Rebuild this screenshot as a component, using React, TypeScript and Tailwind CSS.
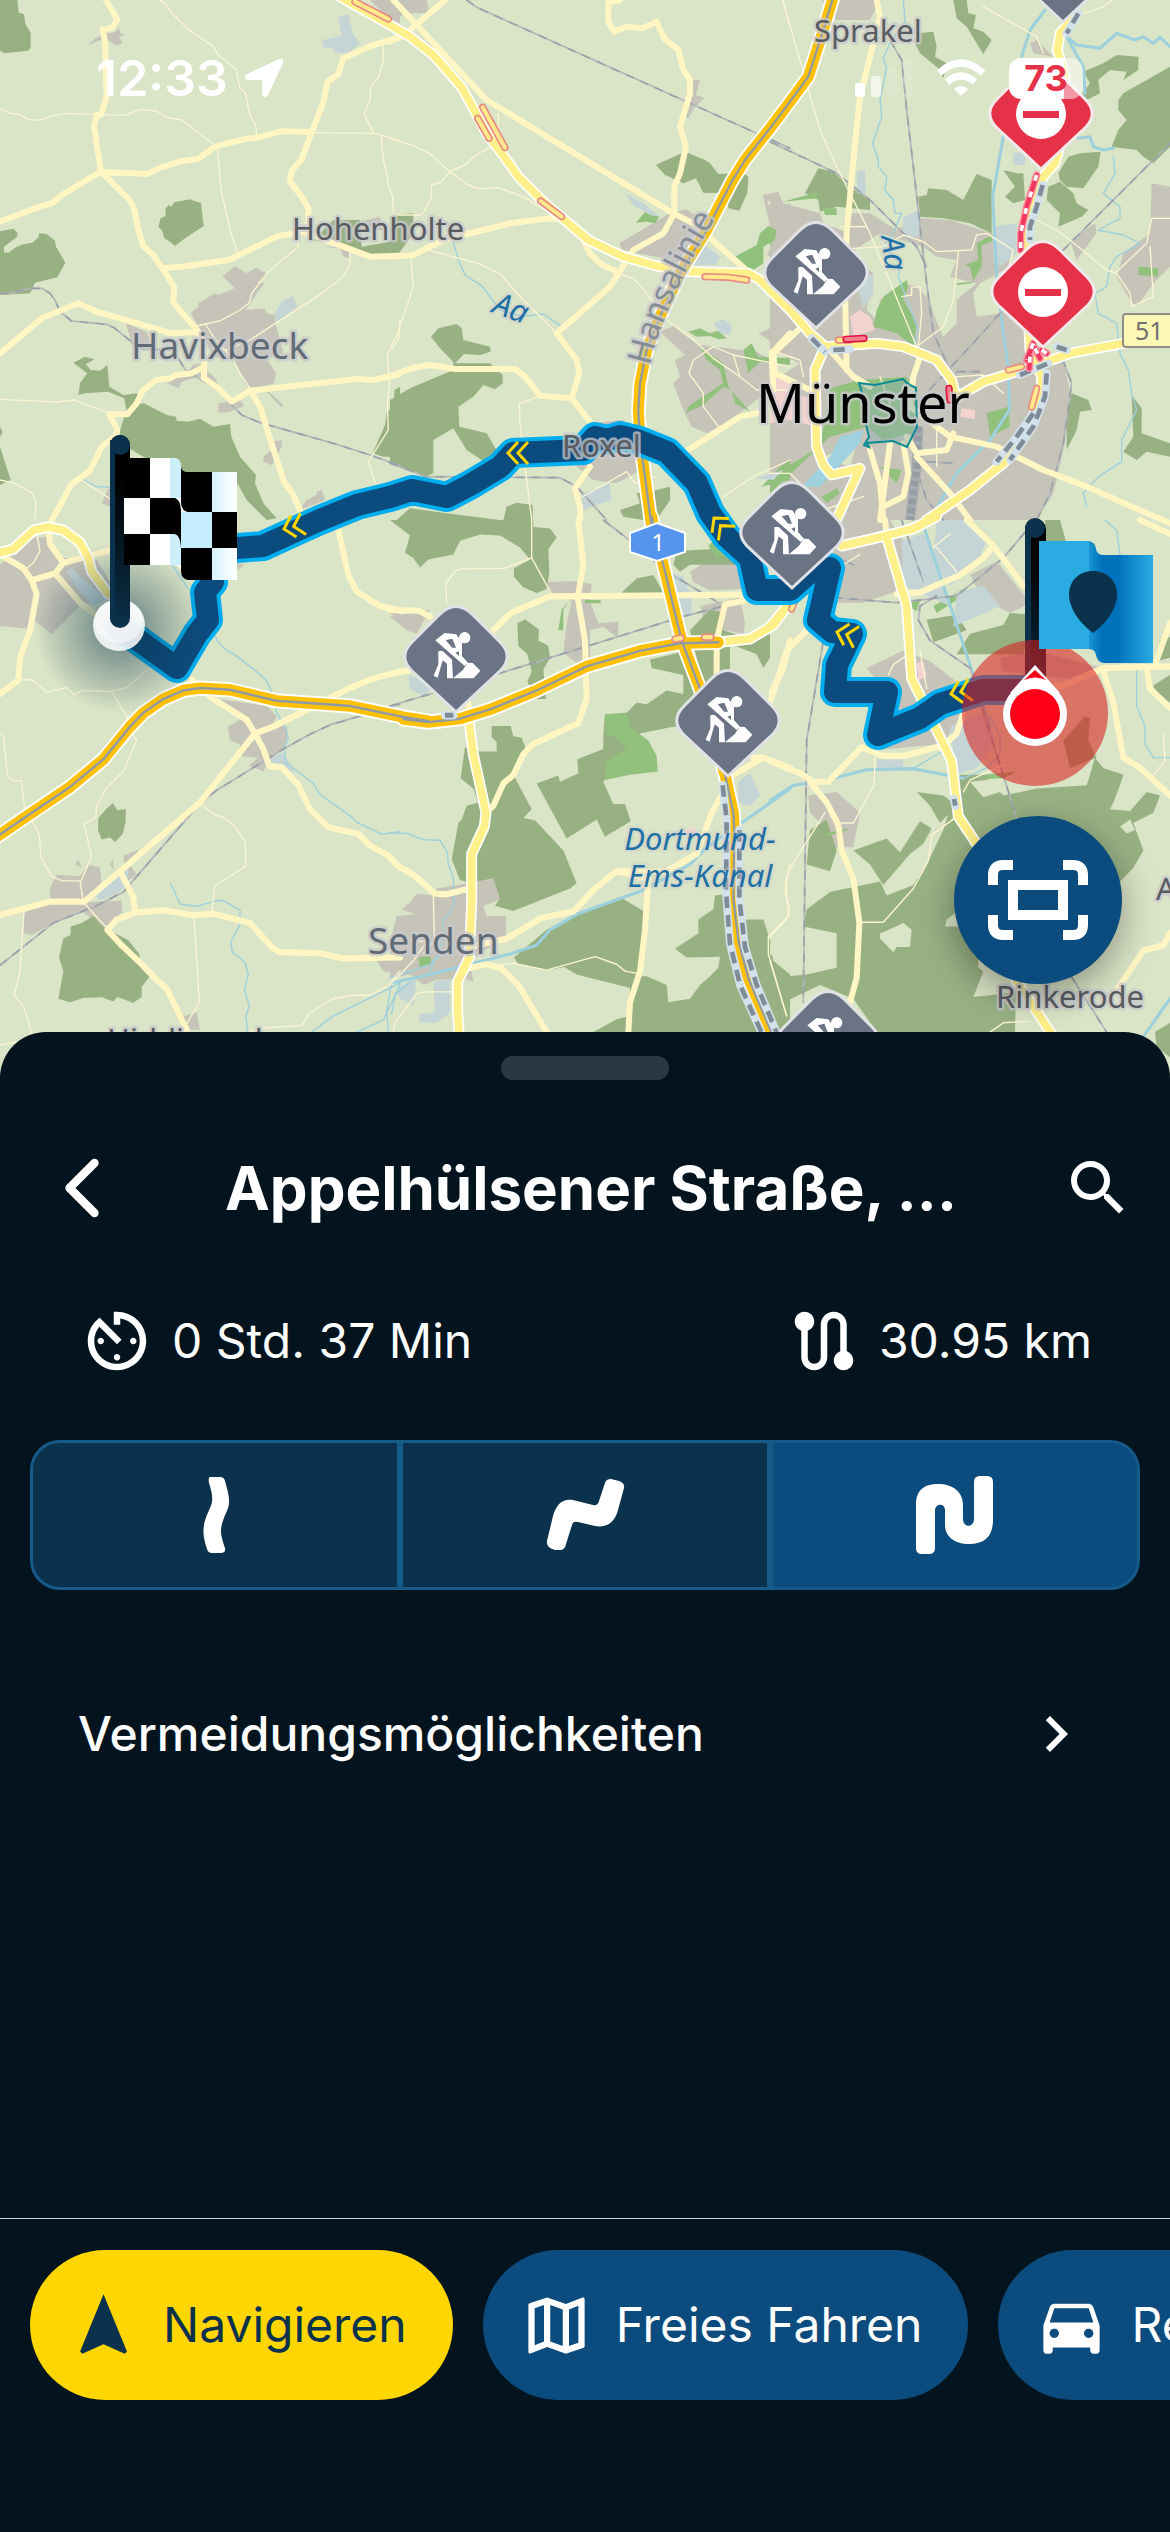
import React, { useState } from 'react';
import { ChevronLeft } from 'lucide-react';
import {
  MdAvTimer,
  MdChevronRight,
  MdDirectionsCar,
  MdNavigation,
  MdOutlineMap,
  MdRoute,
  MdSearch,
} from 'react-icons/md';

type Layer =
  | 'urban'
  | 'field'
  | 'woods'
  | 'clearing'
  | 'park'
  | 'pond'
  | 'pink'
  | 'lake'
  | 'stream'
  | 'canal'
  | 'rail'
  | 'yard'
  | 'minor'
  | 'road'
  | 'primary'
  | 'motorway'
  | 'works'
  | 'slow'
  | 'jam'
  | 'closed';

type Tile = { transform: string } & Partial<Record<Layer, string>>;

// Every tile has its own grid, three units to a pixel
const tiles: Tile[] = [
  {
    transform: 'translate(0 0) scale(0.33333)',
    woods:
      'M0 0H52L56 38L72 42L76 72L92 98V143L84 152L14 160L0 152Z M475 680L482 655L497 648L496 625L508 615L513 622L523 607L570 598L590 605L603 608L611 678L555 715L525 738L510 725L493 715L487 692Z M0 694L40 686L53 700L50 712L12 740V757L25 758L50 740L72 732L98 728L115 712L118 700L140 702L165 722L168 740L196 788L172 832L105 848L90 880L0 885Z M220 1088L255 1070L284 1078L258 1092L272 1110L300 1112L322 1095L328 1160L370 1185L410 1180L420 1190L400 1215L432 1210L500 1245L528 1250L530 1262L565 1265L600 1256L640 1280L690 1272L694 1310L720 1370L768 1425L765 1450L790 1510L830 1555L800 1560L740 1500L712 1450L540 1415L430 1370L360 1330L360 1290L380 1230L372 1195L325 1175L255 1180L235 1185L240 1150L262 1120Z M1200 1160L1184 1170L1180 1215L1160 1240L1155 1275L1118 1360L1150 1370L1200 1370Z M0 1280L8 1296L0 1310Z M0 1340L32 1440L0 1455Z M1000 660H1080L1085 740L1200 720V765H1110L1040 740L940 720Z',
    urban:
      'M264 135L285 115L320 100L340 98L358 85L360 98L376 103L358 112L368 128L350 138L325 120L300 120Z M668 828L706 798L740 820L770 803L800 822L770 850L795 848L770 880L755 905L735 930L795 926L800 940L825 945L828 975L850 1060L800 1075L828 1120L822 1150L790 1160L850 1215L845 1224L800 1175L755 1172L735 1150L700 1080L640 1070L600 990L572 938L596 920V908L648 878L652 886L704 865Z M378 970L440 995L460 1050H400Z M500 1150L560 1120L580 1095L600 1090L650 1140L655 1172L600 1130L545 1145L535 1165Z M655 1210L720 1200L732 1218L690 1235L655 1238Z M790 1370L815 1350L820 1325L845 1320V1340L835 1360L815 1395L790 1385Z M920 1500L950 1485L950 1475L965 1470L975 1500L900 1530Z M305 1510L325 1465L330 1470V1520Z M975 740H1045L1050 775L1030 770L1020 745L1005 745Z M1060 670L1140 650L1150 690H1060Z M1110 0H1200V70L1160 50Z',
    pond: 'M1015 52L1045 42L1058 100L1080 130L1045 160L1005 158L1000 145L970 142L968 120L1025 108Z M825 940L845 905L878 888L892 920L830 968Z',
    minor:
      'M0 325L30 340L58 343L83 358L115 361L150 350L195 340L375 346L420 328L470 333L500 352L545 360L640 432 M478 0L498 13L515 38L565 88L640 140L653 163L708 208L720 265L737 280L748 340L768 380L770 408 M652 445L663 570L690 690L712 758 M940 398L1125 400L1200 423 M1150 135V180L1137 230L1113 260L1110 300L1092 342L1122 400 M1143 405L1150 480L1160 520L1165 555L1178 590L1180 640 M895 720V740L805 815L755 880L748 908L720 930L662 962L590 978 M1050 740V790L1030 830L965 880L835 965L750 1020L680 1050L640 1045 M618 975L640 1010L700 1080L720 1120L755 1172 M1200 960L1195 1020L1162 1060L1168 1150L1162 1210L1165 1290L1105 1385L1125 1450 M0 1198L170 1206L222 1200L330 1240 M0 1440L45 1450L98 1480L108 1510L105 1560 M245 1440L328 1495',
    road: 'M318 0L352 58L335 85L308 88L316 130L320 290L303 345L290 345L282 380L303 515 M0 665L105 625L158 608L190 582L303 515L443 522L470 507L545 483L593 477L645 440L735 417L773 413L840 394L935 396 M1200 112L1120 135L1030 175L1015 222L983 245L970 308L935 396L905 478L875 512L870 545L905 590L925 625V700 M303 515L388 600L402 625L415 690L430 738L460 765L487 805L522 860L520 908L595 995L615 1060 M487 805L545 800L685 780L835 708L910 695L1110 770L1200 767 M0 1060L125 955L235 910L290 935L515 1000L595 995 M615 1060L612 1100L575 1120L528 1125L510 1135L468 1140L428 1172L410 1210L382 1243H328L352 1290L345 1310L305 1340L270 1412L212 1455L185 1508L155 1560 M612 1100V1135L655 1165L695 1205L752 1172L1070 1137L1120 1140L1200 1122 M752 1172L780 1220L808 1310L852 1445L880 1485L900 1530',
    rail: 'M0 880H30L90 865H125L150 880L165 900L180 935L215 963L320 973L345 985L400 1030L430 1048L520 1050L555 1108L655 1172L690 1210L725 1245L780 1268L1000 1330L1110 1365L1200 1397',
    stream: 'M245 1438L290 1460L328 1462',
  },
  {
    transform: 'translate(390 0) scale(0.33333)',
    woods:
      'M798 495L830 480L885 455L945 480L960 490L985 522L1030 520L1050 510L1075 530L1072 580L1048 632L1015 625L1010 580L940 578L918 535L880 550L825 525Z M123 1010L145 985L200 972L215 985L220 1020L300 1040L302 1055L270 1065L222 1062L195 1090H300L338 1125V1150L315 1168L280 1155L250 1190L205 1220L208 1280L290 1300L325 1360L320 1400L275 1380L230 1350L190 1285L130 1320V1420L110 1428L0 1390V1200L60 1165L190 1110V1085L150 1045Z M0 645L70 640V700L30 755L0 760Z M20 1560L60 1525L170 1540L330 1560Z M340 1560L350 1520L380 1508L428 1515V1560Z M690 1530L750 1510L740 1480L800 1470L840 1460V1500L800 1560H760L700 1550Z',
    park: 'M738 668L770 630L808 650L795 670L770 665Z M1035 770L1100 735L1110 700L1135 678L1160 690L1155 720L1120 740V790L1075 820Z M895 995L930 985L960 1000L985 992L1010 1015L985 1018L960 1008L920 1010Z M930 1040L1000 1090L1015 1160L1080 1235L1035 1210L1025 1170L1000 1160L940 1215L885 1240L900 1215L1000 1150L990 1110L950 1080Z M1060 1050L1085 1030L1105 1070L1200 1075V1095L1110 1085L1075 1120Z M1115 1460L1170 1400L1200 1380V1440Z M845 780L870 800L850 830Z',
    urban:
      'M688 730L840 640L890 628L960 680L930 760L870 790L800 770L740 760L695 748Z M0 0H110L118 40L50 40L10 60L0 60Z M1118 585L1165 575V590L1130 605L1150 630L1200 610V740L1130 770L1150 720Z M885 350L905 240L930 240L918 285L945 293L915 320L895 355Z M810 995L850 978L890 1010L930 1035L1100 1055L1180 1100L1150 1170L1100 1200L1050 1240L990 1280L950 1300L905 1280L880 1230L850 1150L870 1130L855 1080L885 1065Z M1105 1000L1140 985L1165 1000L1150 1030Z M605 1270L700 1260L750 1320L790 1380L735 1420L680 1450L610 1440L560 1400Z',
    pond: 'M705 580L760 610L810 650L780 645L730 615Z M945 735L990 770L975 795H910Z M970 970L1000 958L1025 975L1020 1005L990 1000Z M580 1480L660 1450L665 1500L580 1530L570 1500Z M1095 1435L1180 1410L1150 1440Z',
    minor:
      'M0 415L65 435L118 460L180 515L235 555L270 567L325 563L410 595L480 640 M180 515L228 493L262 462L305 440L325 400V340 M180 515L155 545L125 555L122 600L95 645H0 M120 752L265 790L330 822L400 900L500 1000 M0 1040L20 1010L70 860L62 770 M690 822L730 835L770 880L830 960L900 1010L970 1075L1050 1130L1030 1065L970 1040L910 1080L897 1120L940 1180V1220L990 1285 M1030 1065L1200 1100 M1050 1130L1100 1170H1200 M445 1190L388 1212L390 1270L405 1400L425 1560 M560 1500L710 1415L735 1450L800 1430 M1000 1490L1090 1430L1200 1380 M1178 0L1200 80',
    road: 'M690 0L655 8V65L672 95L712 80L758 85L800 65L822 115L865 150L880 210L900 240V280L870 380L888 440L870 520L853 560V640L820 700L730 750L660 860L500 1000L560 1080L568 1120L545 1195L600 1265 M10 0L290 300L850 640L910 670L1080 820 M165 0L60 90L0 125 M0 770L70 765L160 720L360 670L480 655L530 660L570 700L600 760L630 790L680 815 M0 1130L70 1103L120 1095L195 1107H375L405 1130L450 1187L545 1195 M600 1400L555 1465L570 1520V1560 M870 1365L1050 1250L1100 1240 M1200 1000L1145 1060L1150 1170',
    rail: 'M230 0L260 22L1100 400L1200 445 M0 1390L110 1430L510 1433L560 1460L650 1560',
    stream: 'M190 725L205 780L225 825L275 857L330 930L400 950L460 942L515 980',
    primary:
      'M-150 -10L-80 30L0 75L60 110L130 165L215 262L250 325L290 400L350 480L385 530L450 595L500 640L595 720L700 770L800 798L900 815L1075 820L1110 840L1200 930L1260 1000L1305 1040',
    motorway: 'M1330 -10L1300 90L1255 230L1200 305L1140 385L1065 480L1025 545L950 690L870 820L810 950L770 1050L750 1150L745 1230L750 1320L785 1580',
    slow: 'M-105 5L-5 57 M278 322L345 443 M263 355L297 415 M452 603L515 650 M945 830L1015 832L1070 840',
  },
  {
    transform: 'translate(770 0) scale(0.33333)',
    urban:
      'M0 600L25 575L40 610L150 640L300 640L380 690L450 655L540 660L665 700L700 750L790 900L760 950L810 1060L880 1070L900 1180L885 1330L850 1480L800 1560H0Z M1145 550L1200 560V800L1150 850L1100 920L1080 900L1040 830L1060 760L1140 700Z M155 0H330L300 60L200 60Z M780 130L800 120L850 170L790 160Z M900 720L975 670L980 700L920 780Z',
    field:
      'M330 700L460 740L500 770L560 780L540 830L620 850L560 900V970L520 1010L490 940L480 900L440 860L400 850L330 900L320 960L290 930L310 820L240 760Z M630 850L720 800L780 870L690 940L620 950L610 880Z M0 1050L90 1090L30 1130H0Z M160 1370L260 1330L240 1400Z M490 780L555 790L530 840Z M150 640L240 640L235 700L160 670Z',
    woods:
      'M550 0H590L595 40L618 45L610 85L640 95L665 120L640 162L620 130L590 80L560 55Z M445 100L490 95L500 140L495 170L530 190L520 235L505 205L450 160L435 130Z M940 215L1000 190L1040 165L1105 170V210L1060 240L1070 215L1020 210L985 240L990 280L950 300L930 290L960 250Z M1060 280L1200 200V440L1150 490L1120 470L1100 450L1025 440L1045 390L1070 360L1045 330V300Z M865 520L895 470L930 460L992 455L985 500L940 565L890 560L870 540Z M445 590L470 585L475 565L530 570L580 600L600 560L620 522L665 540V700L600 670L520 655L450 650Z M700 510L740 520L760 520L765 600L730 610L705 590L735 560Z M835 560L870 545L910 580L920 610L955 630L935 650L865 680L870 640L830 600Z M105 580L145 505L190 515L240 560L300 600V630L200 620L150 635L145 600Z M905 1180L955 1200L965 1230L930 1235L920 1290L890 1350V1250Z M1085 1185L1115 1225L1115 1300L1200 1330V1370L1130 1355L1100 1380L1060 1355L1090 1310Z',
    park: 'M0 680L15 700L0 740Z M40 605L145 575L140 595Z M160 625L200 625V645L165 645Z M320 930L340 890L410 840L415 860L400 900L440 970L430 1040L380 1000L310 980Z M560 855L605 850L635 800V735L665 725V705L620 730L625 780L585 795L600 800L610 845L560 850Z M1105 800L1165 805V830L1105 825Z M180 1165L270 1140L410 1130L440 1180L430 1300L340 1320L290 1280L180 1310L0 1480V1430L150 1340Z M650 1240L715 1220L720 1280L660 1310Z M330 1400L395 1410L380 1450Z M155 1490L200 1465L210 1480L170 1510Z',
    pond: 'M260 515L285 510L288 580H262Z M730 460L765 455V495H730Z M400 650L450 630L445 710H395Z M670 680L740 670V760L690 800L670 780Z M260 850L310 820V880L280 925Z',
    pink: 'M240 950L270 930L300 950L315 990L250 1010Z M0 1120L60 1130L70 1180L140 1200V1280L60 1260L0 1270Z M575 1225L615 1230V1258L570 1250Z',
    lake: 'M210 1310L280 1290L270 1330L150 1460H95L180 1370Z',
    minor:
      'M38 0L150 390L200 500L300 700L440 1040 M210 680H290 M250 745L340 740L400 705L460 725L500 755L605 750L620 705L650 700L730 750L700 860 M565 755L550 900L520 980L440 1040 M395 890L425 885V862L450 860L455 940L445 1040 M640 20L800 110L820 160 M940 40L1000 20L1025 0 M790 655L860 690L900 720L1010 810L1040 820L1080 880L1085 920L1150 890L1140 740 M1040 815L1130 730L1145 655H1200 M0 1050L90 1080L100 1130 M560 1130L640 1125L700 1180 M0 1420L60 1420L110 1470 M330 1130L360 1210 M500 1290V1400 M160 1530L280 1490',
    road: 'M320 0L330 50L270 290L250 480L230 700L225 870L230 1110 M85 990L10 1060L15 1120L120 1170 M180 1050L250 1130L300 1160 M450 1070L430 1130L420 1220L540 1310L680 1340L820 1410L950 1460L1200 1570 M360 1330L330 1560 M300 1350L330 1450L340 1560 M400 1330L415 1420L400 1490L340 1520 M410 1310L440 1360L530 1350L550 1300 M440 1370L540 1480L600 1560',
    rail: 'M0 425L200 520L300 600L440 740L470 800 M360 120L395 180L410 330L430 500L470 850L490 1000L550 1130L560 1115H630 M1200 430L900 730L690 940L600 1040L450 1200 M860 1030L905 1150L880 1330L840 1480L800 1560 M430 1380L470 1500L520 1560 M470 1385L550 1390',
    yard: 'M445 1280L440 1400L420 1560',
    stream:
      'M400 0L405 65L360 130L340 175L350 205L330 300L335 350L308 430L325 480V500L350 530L345 570L370 600L375 640L395 640L365 710L340 740L390 790L385 830L445 990L430 1050 M1030 470L1035 520L1000 580L1050 620V655L985 690L1060 705L1110 730L1040 770L1020 800L1010 860L975 880L985 940L1040 970L1050 1060L1075 1110L1085 1180L1100 1230L1055 1320V1385L985 1430L940 1480L950 1520',
    canal:
      'M825 30L780 90L755 170 M700 410L668 590L680 830L700 1000L715 1100L718 1230L660 1320L560 1420L480 1560 M890 110L920 135L990 145L1040 100L1095 120L1120 110L1150 130L1170 112L1200 140 M890 110L940 200L945 280 M925 415L960 410L970 440L1000 450L1030 445',
    primary:
      'M165 1040L320 1030L400 1040L500 1080L545 1140L555 1180 M165 1040L135 1110L140 1340L160 1395L185 1425L270 1405L190 1580 M555 1195L640 1145L790 1100L900 1060L1060 1030L1200 1000 M905 60L870 100L862 150L885 230L880 400L855 490L820 530L785 600L765 700L780 1050L815 1130V1180L770 1300L700 1390L600 1470L470 1560',
    works:
      'M925 40L890 100 M818 555L800 620L780 680V720 M830 1120L825 1190L790 1280L720 1380 M790 1240L740 1310L680 1385 M125 1015L165 1055 M190 1050L240 1047 M860 1040L890 1050 M750 1125L835 1090',
    slow: 'M205 1020H240 M715 1110L755 1100 M800 1165L785 1222',
    jam: 'M228 1018L282 1015 M537 1165L540 1200',
    closed: 'M800 525L770 620L752 700V750 M790 1030L770 1080 M780 1070L778 1105 M795 1045L810 1075 M815 1050L830 1060',
  },
  {
    transform: 'translate(0 520) scale(0.33333 0.34439)',
    woods:
      'M295 865L318 840L338 822L352 842L378 840L376 880L368 912L345 935L330 922L305 928L294 900Z M175 1390L190 1310L177 1270L190 1215L212 1205V1180L245 1170L280 1150L300 1172L325 1190L385 1220L418 1260L420 1290L452 1322L425 1355V1385L400 1402L352 1385L340 1398L305 1386L250 1388L210 1400Z M1188 0L1200 15V0Z',
    urban:
      'M0 130L90 50L140 50L190 110L290 115L330 180V220L240 250L155 332L100 290L80 315L0 308Z M683 600L730 575L660 520L800 540L830 570L820 590L862 600L860 650L800 710L790 730L748 712L775 690L720 685V650L690 640Z M150 1070L170 1030L240 1035L265 1000L300 1010L305 1050L260 1110H150Z M70 1140L150 1115L255 1110L365 1105V1140L320 1190L250 1140L170 1165L95 1205L70 1200Z M370 975L415 958L390 1000L410 1030L380 1050Z M225 1000L235 985L245 1010Z M330 1000L340 985V1015Z M550 1440L590 1430L600 1480H560Z M1130 1280L1200 1270V1300L1180 1315L1150 1310Z M1160 265H1200V290Z M712 125L735 130L712 145Z M1190 1160L1200 1150V1180Z',
    pond: 'M285 1090L345 1040L385 1010L380 1060L350 1085L300 1105Z M200 150L215 140L320 230L280 250L240 210Z M800 700L850 675L885 735L840 710Z',
    minor:
      'M0 620L10 625L22 740L38 757L65 758L73 830L118 915L123 980L155 1035L187 1048H240L250 1110L325 1190 M60 464L95 463L140 500L200 487L222 507L250 495L335 498L380 487L440 437 M335 498L380 570V600L410 640L370 730L318 780L290 830L287 865L252 882L275 978L243 1048 M600 823L645 857L668 862L705 890L735 935L738 1005L645 1062L635 1140 M582 1155L598 1400L550 1480 M72 1135L60 1310L43 1380L72 1415L95 1490 M0 1525L50 1515 M1200 1310L1160 1355L1110 1380H1060L1000 1390L930 1430L905 1468L790 1475L750 1485 M110 40L120 90L100 125L80 140',
    road: 'M145 20L150 70L190 125L330 88 M0 100L70 140L95 175L110 215L90 320L60 400L55 465L0 505 M95 175L165 155L190 125 M165 155L240 240L280 270 M1015 30L1045 160L1070 208L1140 250L1200 262 M575 465L640 520L740 580L765 620L820 600L1045 490L1120 460L1200 440 M765 620L790 665L808 715L845 718L895 770L930 840L985 892L1075 912L1110 945L1165 975L1200 1010 M765 620L600 820L360 1020L253 1108H150L0 1147 M360 1020L400 1095L405 1140L350 1160L322 1190L365 1235L425 1290L470 1335L500 1360L560 1480 M405 1140L490 1133L580 1148L640 1143L750 1170L820 1245L840 1255L960 1258L1030 1273L1200 1270',
    rail: 'M0 1293L160 1170L290 1120L370 1080L600 823L650 785L850 665L930 622L990 595L1200 535',
    stream:
      'M520 135L565 200 M640 330L655 355L685 382L700 388L770 440L798 465L820 510L830 560L855 600L865 635L852 660L858 705L940 765L960 797L1055 862L1070 877L1145 912L1200 905 M512 1055L540 1115L590 1122L650 1105L670 1105L720 1133V1175L693 1225L697 1255L735 1285L745 1320L733 1365L748 1410L738 1440L743 1487 M935 1487L1000 1440L1200 1345 M1165 1487L1160 1430L1175 1340L1200 1338 M1070 1487L1150 1452L1200 1350',
    primary: 'M-10 97L40 85L100 30L145 20L190 30L240 65L265 110L275 150L325 215',
    motorway: 'M-10 920L80 860L210 775L310 695L390 600L430 560L490 520L550 495L600 488L690 493L830 525L1050 540L1190 568L1210 572L1285 584',
  },
  {
    transform: 'translate(390 520) scale(0.33333 0.34439)',
    woods:
      'M0 0H430V20L480 25L500 50L475 85L478 150L470 200L440 212L400 195L372 165V140L420 115L390 80L330 45L270 42L210 60L190 100L115 115L90 138L70 110L45 95L60 45Z M382 300L405 288L447 318L445 350L475 365L480 400L460 435L468 520L440 520L412 470L425 440L412 390L385 365Z M305 598H362L370 628L395 632L408 665L370 740L425 840L400 865L435 872L520 960L560 1055L540 1070L370 1135L315 1120L330 1100L310 1040L240 1055L210 1045L185 985L205 880L215 870L230 830L265 820L250 780L212 750L225 660L270 672H320V645L305 630Z M440 765L505 742L510 760L565 735L562 695L640 665V625L645 565L710 560L740 530L770 535L830 495L880 505V450L785 430L780 405L870 385L940 500L960 600L850 600L800 610L750 620L640 760L670 825L705 825L722 875L645 920L620 870L530 925Z M372 1270L470 1190L560 1145L690 1095L760 1135L765 1200L750 1320L725 1360L560 1320L522 1298L470 1308L385 1290Z M610 1487L680 1450L720 1440V1325L770 1325L830 1350L835 1400L900 1390L930 1350L960 1325L985 1300L990 1268L890 1270L855 1245L925 1200V1160L970 1130L975 1090L1010 1085L1040 1160L1120 1160L1140 1220L1150 1280L1200 1320V1487Z M690 215L740 170L790 160L820 210L800 225L720 225Z M860 90L960 85L1040 100L1060 130L900 130L870 150L850 130Z M900 320L960 260L1000 270V320L1060 340L1140 330V400L1120 430L1100 390L1020 360V430L990 490L940 480Z',
    park: 'M645 563L710 562L720 600L775 640L800 685L803 730L720 740L645 755L650 700L710 665L690 640L650 620Z M540 235L520 260V320H505L515 260Z M585 232H632V242H585Z M85 1270L120 1265L125 1290L90 1300Z M955 75L990 40L1010 100L980 110Z',
    urban:
      'M455 160L475 140V180L560 178L605 185L600 235L625 300L685 295V345L640 310L600 320V400L560 415L520 385L530 300L545 235L480 215Z M900 150L960 115L1030 110L1060 200L960 205L910 180Z M0 280L120 260L80 330L50 320Z M930 250L1050 225L1065 300L1060 330L1000 320V290H940Z M35 1130L60 1110L80 1085L130 1090L140 1070L240 1055L315 1040L340 1100L280 1120L290 1150H348V1210L300 1240L240 1280L250 1340L230 1335H140L100 1350L60 1320L0 1330V1230L20 1150L75 1145Z',
    pond: 'M55 450L140 475L100 512L60 490Z M830 150L880 165L905 225V280L860 270Z M20 1360L80 1330L70 1410L30 1390Z M130 1340L180 1335V1430L140 1460L90 1460L85 1435L135 1430Z M1045 760L1080 735L1110 800L1080 830L1045 820Z',
    pink: 'M880 900L915 892V915L885 918Z',
    minor:
      'M425 0V110L485 215 M425 110L345 140L215 142L195 148L167 185L170 240 M130 1090L133 1220L100 1260 M0 1350L70 1280L110 1225L60 1220 M250 1300L370 1287L470 1307L615 1268L680 1290L705 1310L750 1318 M10 1487L15 1460L80 1375L110 1370H200 M1200 1000L1187 1050L1195 1150L1135 1210V1260L1190 1440',
    road: 'M565 0L580 130L563 225L585 350L590 520L565 590L430 650L400 680L370 740L340 765L310 830L285 850 M0 262L85 263L120 280 M310 320L365 268L480 222L1060 217 M0 447L55 437 M232 500L240 600 M1060 235L1005 245L980 350V480 M1090 690L1120 690L1200 720 M1120 690L1030 740L965 850L920 970L830 1020L680 1020L615 1070L550 1137L455 1155L350 1215L240 1240 M0 980L25 1005L70 1030L135 1085L170 1087L230 1072 M220 1305L290 1290L335 1303L385 1350L470 1487 M680 1020L775 1040L765 1190L750 1310L720 1400L715 1487 M1200 350L1180 430L1145 500',
    rail: 'M0 540L330 445L580 370L880 280L1000 250 M640 0L720 60L830 150L900 190L985 240',
    stream:
      'M0 908L50 910L100 928L150 930L172 965L175 1000L190 1040L193 1120L160 1165L155 1230L120 1310 M5 1435L15 1380L60 1340 M0 1330L120 1290L180 1240L240 1250',
    canal: 'M1200 780L1055 880L950 950L900 1000L760 1075L560 1145L480 1190L440 1235L360 1260L120 1320L0 1345',
    primary: 'M238 590L250 680L288 850L283 890L245 970V1110L238 1270L203 1340V1430L208 1500 M985 355L1080 345L1150 305L1200 240L1230 200',
    motorway:
      'M785 -10L800 60L820 130L875 350L930 490L1005 740L1030 850L1033 900L1030 1100L1045 1220L1075 1330L1150 1500 M40 578L115 587L210 577L300 550L440 495L590 425L750 380L870 358L985 355',
    works: 'M998 770L1010 870L1008 1080L1020 1230L1050 1350L1120 1500 M1048 900V1100L1065 1240L1100 1350L1165 1500 M165 567H190',
    slow: 'M855 346L873 343 M943 340L963 340',
  },
  {
    transform: 'translate(770 520) scale(0.33333 0.34439)',
    urban:
      'M0 0H360L400 60V200L340 220L280 240L200 240L180 100L0 100Z M600 160L680 120L780 240L720 270L640 230Z M290 430L400 380L480 410L600 500L560 590L520 650L300 670L400 560Z M115 800L200 790L270 850L250 950H175L170 900L120 850Z M690 400L800 380L1000 430L900 460L700 440Z',
    woods:
      'M350 1090L430 1060L470 1000L520 900L570 740L640 740L700 800L800 780L950 770L960 740L975 690L1000 720L1060 740L1050 770L1030 820L1020 840L1080 845L1130 790L1170 800L1150 850L1090 880L1120 960L1090 1010L1050 1050L1000 1200L740 1290L735 1487H320L250 1390L150 1350L0 1420V1330L110 1320L200 1300V1200L100 1180L110 1130L180 1080L330 1050Z M250 960L350 925L390 965L450 875L485 895L460 940L420 970L340 1060L300 1000Z M440 790L520 800L560 830L510 880L480 830Z M120 900L170 870L200 960L180 1020L110 1000Z M720 270L790 275L760 390H560L600 330L700 305Z M825 0H870L890 70L830 100Z M470 290L560 275L590 320L490 355Z M880 640L945 570L960 575L955 640L980 690L900 720Z M1150 480L1200 450V530L1160 510Z M1155 1487L1200 1460V1560L1160 1530Z M1170 350L1200 340V400L1160 410Z',
    clearing:
      'M330 1200L345 1195L400 1170L425 1190L420 1240L380 1240L370 1255L330 1215Z M610 1385L640 1310L625 1300V1270L700 1290L740 1310L735 1370L660 1380Z M525 1180L530 1160L570 1130V1180Z M600 760L700 750L690 790L640 805Z M0 1230L50 1250L60 1275L30 1285L0 1260Z M1050 890L1080 870L1095 900L1070 910Z',
    pond: 'M395 60L460 40L500 100L540 250L470 220L400 190Z M500 0H590L650 60L620 130L540 190L490 120Z M560 210L640 190L690 250L550 310Z M320 695H400V720H320Z M540 600L640 560L680 640L620 720L560 740Z',
    pink: 'M440 415L460 410L470 455L445 465Z',
    park: 'M490 250L580 200V220L500 270Z M400 240L450 235L440 265Z M165 910L235 895V900L170 918Z M640 740L740 730L700 750L640 752Z M540 30L625 80L615 95L545 45Z M580 200L605 260L595 265Z',
    minor:
      'M165 850L100 950L55 1020L45 1080L60 1130L50 1160L0 1210 M315 690L312 770L250 880H200 M555 865L485 915L475 990L430 1070L340 1168H265 M0 1280L50 1440 M660 1487L700 1460L780 1455 M450 380L470 490 M1180 620L1185 700L1150 740 M220 130L270 100 M355 450L370 420L430 380 M580 790L600 755L700 710 M500 80L560 150 M540 40L490 80',
    road: 'M0 700L90 735L130 760H175L275 660L340 685H400L520 655L560 620L580 560 M120 760L170 820L205 885L215 960L250 1040L268 1170L260 1330L240 1400 M0 530L50 380L110 320 M345 0L352 60 M380 215L450 210L570 160L640 110L670 75L590 0 M670 75L760 190 M830 490L880 480L1000 430L1200 425 M1000 440L1030 530L1060 690L1110 720L1200 800 M1155 420L1200 300 M1130 430L1140 490L1200 545 M1030 1380L1120 1250L1180 1235L1200 1200 M1110 0L1200 40',
    rail: 'M250 130L60 50 M160 350L110 640L105 1000L100 1400 M190 225L380 240L560 220L700 110L770 30 M500 220L450 250L445 290L480 350L600 430L660 620L740 865 M900 1320L1010 1487 M395 0L460 180',
    stream:
      'M430 722L520 670 M580 750L650 720L690 680V630L660 570 M1005 0L1040 30L1050 100 M1100 430V540L1125 600V650L1150 690H1200',
    canal: 'M0 815L70 770L150 760L290 725L430 722L580 750 M465 30L600 420L660 600 M1120 1500L1200 1390',
    primary: 'M0 310L60 240L85 200 M215 75L350 45L430 25L500 -10 M350 50L410 250L425 460L480 570L545 700L565 860L640 970L740 1340L850 1500',
    works: 'M552 810L556 830',
    slow: 'M83 210L65 258',
  },
];

const areas: { layer: Layer; color: string }[] = [
  { layer: 'urban', color: '#c6c4b8' },
  { layer: 'field', color: '#dae4c6' },
  { layer: 'woods', color: '#98b183' },
  { layer: 'clearing', color: '#dae4c6' },
  { layer: 'park', color: '#92c07d' },
  { layer: 'pond', color: '#c5d5d5' },
  { layer: 'pink', color: '#f3d3cf' },
  { layer: 'lake', color: '#9fd1de' },
];

// Painted from bottom to top; one layer can take several strokes
const strokes: { layer: Layer; color: string; width: number; dash?: string; butt?: boolean }[] = [
  { layer: 'stream', color: '#9bd0dc', width: 4 },
  { layer: 'canal', color: '#9bd0dc', width: 9 },
  { layer: 'rail', color: '#b3b6b8', width: 5 },
  { layer: 'rail', color: '#9aa1a8', width: 5, dash: '26 22', butt: true },
  { layer: 'yard', color: '#a9adaf', width: 30, butt: true },
  { layer: 'yard', color: '#959ca3', width: 22, dash: '18 9', butt: true },
  { layer: 'minor', color: '#fbf5d2', width: 4 },
  { layer: 'road', color: '#fff6c4', width: 18 },
  { layer: 'primary', color: '#ffffff', width: 33 },
  { layer: 'primary', color: '#fff08a', width: 23 },
  { layer: 'motorway', color: '#ffffff', width: 44 },
  { layer: 'motorway', color: '#ffc107', width: 33 },
  { layer: 'motorway', color: '#8f9aa5', width: 7 },
  { layer: 'works', color: '#d3e2ea', width: 24 },
  { layer: 'works', color: '#7f8b96', width: 14, dash: '34 20', butt: true },
  { layer: 'slow', color: '#e98b83', width: 22 },
  { layer: 'slow', color: '#ffe98a', width: 12 },
  { layer: 'jam', color: '#e0123f', width: 22 },
  { layer: 'jam', color: '#f5808f', width: 12 },
  { layer: 'closed', color: '#fb8a9b', width: 22 },
  { layer: 'closed', color: '#f0355e', width: 13 },
  { layer: 'closed', color: '#ffffff', width: 11, dash: '18 34', butt: true },
];

const routePath =
  'M1035 690L983 690L940 704L920 718L878 735L887 692L835 692L837 665L852 634L832 632L818 620L830 568L808 574L790 590L757 590L750 558L727 537L710 513L697 483L667 452L637 440L620 436L607 440L595 437L583 450L513 453L500 467L470 485L447 497L412 490L390 497L357 505L320 520L300 529L263 546L213 550V582L205 592L208 620L197 634L177 668L120 627';

const arrows = [
  { x: 508, y: 453, angle: 0 },
  { x: 284, y: 529, angle: -15 },
  { x: 714, y: 518, angle: 50 },
  { x: 837, y: 632, angle: 15 },
  { x: 951, y: 694, angle: -12 },
];

const roadworks = [
  { x: 816, y: 272 },
  { x: 792, y: 532 },
  { x: 456, y: 656 },
  { x: 728, y: 720 },
  { x: 828, y: 1041 },
  { x: 1063, y: -34 },
];

const closures = [
  { x: 1041, y: 113 },
  { x: 1043, y: 291 },
];

const PIN = 'M0 56L-45 14Q-58 0 -44 -14L-17 -41Q0 -58 17 -41L44 -14Q58 0 45 14Z';

function RoadworksPin({ x, y }: { x: number; y: number }) {
  return (
    <g transform={`translate(${x} ${y})`}>
      <path d={PIN} fill="#6b7485" stroke="#e1e2e6" strokeWidth="3" />
      <g transform="scale(0.33333) translate(-137 -815)">
        <circle cx="163" cy="760" r="17" fill="#fff" />
        <path d="M75 768L103 746L138 750L155 776V815L173 836L163 845L84 776Z" fill="#fff" />
        <path d="M106 768L126 763L137 790L126 790Z M135 805L146 801V815Z" fill="#6b7485" />
        <path d="M84 800L97 800L125 826L128 882H110V838L97 828L82 880L70 874L84 840Z" fill="#fff" />
        <path d="M128 882L158 856L172 835L187 836L210 859L190 882Z" fill="#fff" />
      </g>
    </g>
  );
}

function ClosurePin({ x, y }: { x: number; y: number }) {
  return (
    <g transform={`translate(${x} ${y})`}>
      <path d={PIN} fill="#e63249" stroke="#f3e9ea" strokeWidth="3" />
      <circle cx="0" cy="1" r="25" fill="#fff" />
      <rect x="-18" y="-2" width="36" height="7" fill="#e63249" />
    </g>
  );
}

function FinishFlag() {
  return (
    <g>
      <circle cx="120" cy="628" r="86" fill="url(#finishGlow)" />
      <circle cx="119" cy="625" r="26" fill="#fff" opacity="0.85" />
      <ellipse cx="119" cy="621" rx="24" ry="22" fill="#fff" opacity="0.5" />
      <rect x="110" y="435" width="20" height="193" rx="10" fill="url(#pole)" />
      <rect x="110" y="440" width="5" height="180" fill="#0b324c" />
      <circle cx="120" cy="445" r="10" fill="#0b324c" />
      <path d="M124 458H175Q181 459 181 467Q182 472 188 472H237V580H188Q181 579 181 571Q180 565 174 565H124Z" fill="#fff" />
      <path d="M170 458H175Q181 459 181 467V498H170Z M170 534H175Q181 535 181 545V565H170Z" fill="#cdeefb" />
      <path d="M181 512H212V548H181Z" fill="#c4edfd" />
      <path d="M212 472H237V512H212Z M212 548H237V580H212Z" fill="url(#flagSheen)" />
      <path d="M124 458H150V498H124Z M150 498H175Q181 500 181 512V548Q180 534 174 534H150Z M124 534H150V565H124Z" fill="#000" />
      <path d="M181 467Q182 472 188 472H212V512H188Q182 511 181 504Z M212 512H237V548H212Z M181 548H212V580H188Q181 579 181 571Z" fill="#000" />
    </g>
  );
}

function StartMarker() {
  return (
    <g>
      <rect x="1025" y="519" width="21" height="178" rx="10" fill="url(#pole)" />
      <rect x="1025" y="526" width="6" height="165" fill="#0b324c" />
      <circle cx="1035" cy="528" r="10" fill="#0b324c" />
      <circle cx="1035" cy="713" r="73" fill="#d91e1e" fillOpacity="0.57" />
      <path d="M1039 541H1088Q1095 542 1095 549V649H1039Z" fill="#2aabe2" />
      <path d="M1089 541Q1095 542 1096 549Q1097 555 1104 555H1153V663H1104Q1097 662 1096 655Q1095 649 1089 649Z" fill="url(#startFlag)" />
      <path d="M1093 571c-14 0-24 10-24 23c0 16 12 30 24 39c12-9 24-23 24-39c0-13-10-23-24-23Z" fill="#0b324c" />
      <path d="M1035 665L1060 693H1010Z" fill="#fff" />
      <circle cx="1035" cy="714" r="32" fill="#fff" />
      <path d="M1035 670L1046 680Q1035 675 1024 680Z" fill="#ff0018" />
      <circle cx="1035" cy="714" r="25" fill="#ff0018" />
    </g>
  );
}

function RouteMap() {
  return (
    <svg viewBox="0 0 1170 1080" preserveAspectRatio="xMidYMin slice" className="block w-full h-[1080px] bg-[#dae4c6]" role="img" aria-label="Karte">
      <defs>
        <radialGradient id="finishGlow">
          <stop offset="0" stopColor="#0b324c" stopOpacity="0.6" />
          <stop offset="0.5" stopColor="#0b324c" stopOpacity="0.3" />
          <stop offset="1" stopColor="#0b324c" stopOpacity="0" />
        </radialGradient>
        <linearGradient id="pole" x1="0" y1="0" x2="0" y2="1">
          <stop offset="0.2" stopColor="#000" />
          <stop offset="1" stopColor="#0b324c" />
        </linearGradient>
        <linearGradient id="flagSheen">
          <stop offset="0" stopColor="#d8f4ff" />
          <stop offset="1" stopColor="#fff" />
        </linearGradient>
        <linearGradient id="startFlag">
          <stop offset="0" stopColor="#1c95d4" />
          <stop offset="0.2" stopColor="#0072bc" />
          <stop offset="0.45" stopColor="#0072bc" />
          <stop offset="1" stopColor="#2aabe2" />
        </linearGradient>
      </defs>

      {areas.map(({ layer, color }) => (
        <g key={layer} fill={color}>
          {tiles.map((tile) => tile[layer] && <path key={tile.transform} transform={tile.transform} d={tile[layer]} />)}
        </g>
      ))}
      {strokes.map(({ layer, color, width, dash, butt }, i) => (
        <g
          key={i}
          fill="none"
          stroke={color}
          strokeWidth={width}
          strokeDasharray={dash}
          strokeLinecap={butt ? 'butt' : 'round'}
          strokeLinejoin="round"
        >
          {tiles.map((tile) => tile[layer] && <path key={tile.transform} transform={tile.transform} d={tile[layer]} />)}
        </g>
      ))}

      {/* Old town ring */}
      <path
        d="M859 383L875 385L903 379L908 384L916 388L917 427L907 447L893 441L867 443L869 447L864 445L869 437L865 420L864 400Z"
        fill="#8fb0ae"
        fillOpacity="0.5"
        stroke="#0b8c94"
        strokeWidth="2"
      />

      {/* Route */}
      <g fill="none" strokeLinejoin="round" strokeLinecap="round">
        <path d={routePath} stroke="#00adef" strokeWidth="30" />
        <path d={routePath} stroke="#0c4b7d" strokeWidth="22" />
      </g>
      {arrows.map(({ x, y, angle }) => (
        <path
          key={x}
          transform={`translate(${x} ${y}) rotate(${angle})`}
          d="M10 -11L0 0L10 11M20 -11L10 0L20 11"
          fill="none"
          stroke="#ffd600"
          strokeWidth="3"
        />
      ))}

      {/* Road shields */}
      <path d="M630 533L657 523L685 533V552L657 561L630 552Z" fill="#5595f0" stroke="#fff" strokeWidth="2" />
      <text x="658" y="551" textAnchor="middle" fontSize="24" fill="#fff" className="font-['Noto_Sans',sans-serif]">1</text>
      <rect x="1123" y="314" width="60" height="33" rx="3" fill="#fdf7b5" stroke="#8f8f88" strokeWidth="2" />
      <text x="1135" y="340" fontSize="25" fill="#707070" className="font-['Noto_Sans',sans-serif]">51</text>

      {/* Place names */}
      <g
        className="font-['Noto_Sans',sans-serif]"
        fill="#585c60"
        stroke="#c9c9cd"
        strokeOpacity="0.75"
        strokeWidth="5"
        strokeLinejoin="round"
        paintOrder="stroke"
        fontSize="31"
      >
        <text x="814" y="42">Sprakel</text>
        <text x="292" y="240">Hohenholte</text>
        <text x="562" y="457">Roxel</text>
        <text x="996" y="1008">Rinkerode</text>
        <text x="1156" y="900">A</text>
        <text x="107" y="1051">Hiddingsel</text>
        <g fill="#606b75" fontSize="37">
          <text x="131" y="359">Havixbeck</text>
          <text x="368" y="954">Senden</text>
        </g>
        <text x="756" y="423" fontSize="54" fill="#000">Münster</text>
        <path id="hansalinie" d="M650 366Q662 308 714 220" fill="none" stroke="none" />
        <text fill="#858e98" fontSize="33">
          <textPath href="#hansalinie">Hansalinie</textPath>
        </text>
        <g fill="#1f70a6" strokeOpacity="0.35" fontStyle="italic" fontSize="31">
          <text transform="translate(491 312) rotate(20)">Aa</text>
          <text transform="translate(881 237) rotate(82)">Aa</text>
          <text x="700" y="850" textAnchor="middle">Dortmund-</text>
          <text x="700" y="887" textAnchor="middle">Ems-Kanal</text>
        </g>
      </g>

      {roadworks.map((pin) => (
        <RoadworksPin key={pin.y} {...pin} />
      ))}
      {closures.map((pin) => (
        <ClosurePin key={pin.y} {...pin} />
      ))}

      <FinishFlag />
      <StartMarker />
    </svg>
  );
}

function StatusBar() {
  return (
    <div className="absolute inset-x-0 top-0 pt-12 pl-24 pr-[87px] flex items-center justify-between text-white">
      <div className="flex items-center gap-4">
        <span className="text-[50px] leading-[60px] font-semibold">12:33</span>
        <svg width="40" height="40" viewBox="0 0 40 40" fill="currentColor">
          <path d="M35 1Q40 0 39 5L24 37Q20 42 18 36V22H4Q-2 20 3 16Z" />
        </svg>
      </div>
      <div className="flex items-center gap-[23px]">
        <svg width="58" height="38" viewBox="0 0 58 38" fill="currentColor">
          <rect x="0" y="24" width="10" height="14" rx="3" />
          <rect x="16" y="17" width="10" height="21" rx="3" opacity="0.65" />
          <rect x="32" y="9" width="10" height="29" rx="3" opacity="0.15" />
          <rect x="48" y="1" width="10" height="37" rx="3" opacity="0.15" />
        </svg>
        <svg width="50" height="38" viewBox="0 0 50 38" fill="none" stroke="currentColor" strokeWidth="7">
          <path d="M3 14Q25 -6 47 14" />
          <path d="M11 23Q25 11 39 23" />
          <path d="M25 37L18 30Q25 24 32 30Z" fill="currentColor" stroke="none" />
        </svg>
        <div className="h-[41px] w-[74px] rounded-xl overflow-hidden flex items-center justify-center bg-linear-to-r from-white from-75% to-white/50 to-75%">
          <span className="text-4xl font-bold text-[#e63249]">73</span>
        </div>
      </div>
    </div>
  );
}

const curves = [
  {
    id: 'direct',
    label: 'Schnelle Route',
    icon: 'M35 2H45Q49 2 50 6C53 18 57 26 51 38C44 54 45 58 50 73Q51 78 46 78H37Q33 78 32 74C26 56 28 48 35 33C39 25 37 18 34 8Q33 2 35 2Z',
  },
  {
    id: 'curvy',
    label: 'Kurvige Route',
    icon: 'M10 75Q1 73 2 66L8 41C11 30 17 23 28 25L48 30Q53 31 54 26L60 8Q61 4 66 4L74 6Q80 8 79 13L73 35C70 47 62 53 50 51L33 47Q28 46 27 50L21 69Q20 75 15 75Z',
  },
  {
    id: 'twisty',
    label: 'Extra kurvige Route',
    icon: 'M1 73V30C1 15 9 9 23 9C38 9 48 17 48 30V44C48 53 59 53 59 44V7Q59 1 65 1H72Q78 1 78 7V45C78 61 70 69 54 69C39 69 30 61 30 50V35C30 28 20 28 20 36V73Q20 79 14 79H7Q1 79 1 73Z',
  },
];

export default function App() {
  const [curve, setCurve] = useState('twisty');

  return (
    <div className="min-h-screen flex flex-col bg-[#04141f] text-white font-['Inter',sans-serif] overflow-hidden">
      <div className="relative">
        <RouteMap />
        <StatusBar />
        <button
          aria-label="Route einpassen"
          className="absolute right-12 bottom-24 size-[168px] rounded-full bg-[#0c4b7d] flex items-center justify-center shadow-[0_12px_36px_rgba(0,0,0,0.35)]"
        >
          <svg width="100" height="80" viewBox="0 0 20 16" fill="none" stroke="currentColor" strokeWidth="2">
            <path d="M1 5V3Q1 1 3 1H5M15 1H17Q19 1 19 3V5M19 11V13Q19 15 17 15H15M5 15H3Q1 15 1 13V11" />
            <rect x="5" y="5" width="10" height="6" />
          </svg>
        </button>
      </div>

      <main className="relative -mt-12 flex-1 flex flex-col rounded-t-[46px] bg-[#04141f] pt-6">
        <div className="mx-auto h-6 w-[168px] rounded-xl bg-[#2b3743]" />

        <header className="mt-[72px] h-[72px] pl-8 pr-9 flex items-center justify-between">
          <button aria-label="Zurück">
            <ChevronLeft size={100} />
          </button>
          <h1 className="mr-3 text-[60px] leading-[72px] font-bold whitespace-nowrap">Appelhülsener Straße, ...</h1>
          <button aria-label="Suchen">
            <MdSearch size={72} />
          </button>
        </header>

        <div className="mt-[78px] px-[78px] flex items-center justify-between text-5xl">
          <div className="flex items-center gap-4">
            <MdAvTimer size={78} />
            <span>0 Std. 37 Min</span>
          </div>
          <div className="flex items-center gap-4">
            <MdRoute size={78} />
            <span>30.95 km</span>
          </div>
        </div>

        <div className="mt-[60px] mx-[30px] grid grid-cols-3">
          {curves.map(({ id, label, icon }) => (
            <button
              key={id}
              aria-label={label}
              onClick={() => setCurve(id)}
              className={`h-[150px] flex items-center justify-center border-3 border-[#165a89] first:rounded-l-[30px] last:rounded-r-[30px] ${
                curve === id ? 'bg-[#0c4b7d]' : 'bg-[#0b324c]'
              }`}
            >
              <svg width="80" height="80" viewBox="0 0 80 80" fill="currentColor">
                <path d={icon} />
              </svg>
            </button>
          ))}
        </div>

        <button className="mt-[108px] h-[72px] px-[78px] flex items-center justify-between text-5xl font-medium">
          <span>Vermeidungsmöglichkeiten</span>
          <MdChevronRight size={72} />
        </button>

        <footer className="mt-auto border-t border-[#d0d4d8] pt-[31px] pb-[132px] pl-[30px] flex gap-[30px] overflow-hidden text-5xl whitespace-nowrap">
          <button className="shrink-0 h-[150px] pl-9 pr-[46px] flex items-center gap-[22px] rounded-full bg-[#ffd600] text-[#0b324c]">
            <MdNavigation size={75} />
            Navigieren
          </button>
          <button className="shrink-0 h-[150px] pl-9 pr-[46px] flex items-center gap-[22px] rounded-full bg-[#0c4b7d]">
            <MdOutlineMap size={75} />
            Freies Fahren
          </button>
          <button className="shrink-0 h-[150px] pl-9 pr-[46px] flex items-center gap-[22px] rounded-full bg-[#0c4b7d]">
            <MdDirectionsCar size={75} />
            Reise
          </button>
        </footer>
      </main>
    </div>
  );
}
